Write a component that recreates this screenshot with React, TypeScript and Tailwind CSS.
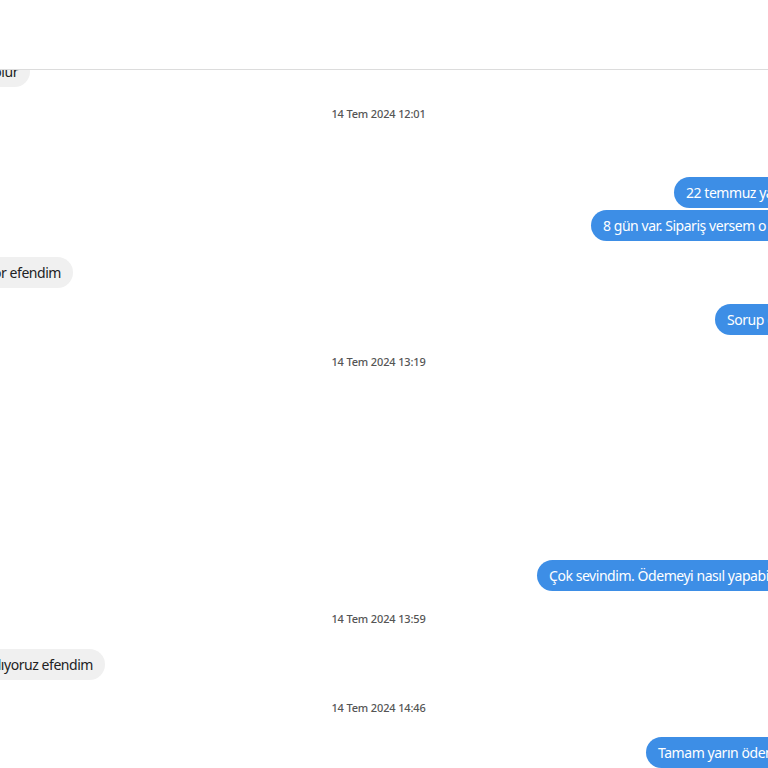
const font = { fontFamily: '"Noto Sans", "Open Sans", Arial, sans-serif' };

function Incoming({ text, edge, top }: { text: string; edge: string; top: string }) {
  return (
    <div className={`flex justify-end ${edge} ${top}`}>
      <div className="shrink-0 whitespace-nowrap rounded-full bg-[#f0f0f0] px-3 pt-[6px] pb-[5px] text-[14px] leading-[20px] tracking-[-0.45px] text-[#222]">
        {text}
      </div>
    </div>
  );
}

function Outgoing({ text, left, top }: { text: string; left: string; top: string }) {
  return (
    <div className={`flex ${top}`}>
      <div
        className={`shrink-0 whitespace-nowrap rounded-full bg-[#3d8ee6] px-3 pt-[6px] pb-[5px] text-[14px] leading-[20px] tracking-[-0.45px] text-white ${left}`}
      >
        {text}
      </div>
    </div>
  );
}

function Stamp({ text, top }: { text: string; top: string }) {
  return (
    <div
      className={`w-[757px] text-center text-[11px] leading-[16px] font-medium tracking-[-0.15px] text-[#555] ${top}`}
    >
      {text}
    </div>
  );
}

export default function App() {
  return (
    <div className="h-[768px] w-[768px] overflow-hidden bg-white" style={font}>
      <div className="relative z-10 h-[70px] border-b border-[#dcdcdc] bg-white" />
      <div className="flex flex-col">
        <Incoming text="Ürün stokta mevcut, gönderim yapılabilir olur" edge="w-[30px]" top="-mt-[14px]" />
        <Stamp text="14 Tem 2024 12:01" top="mt-[19px]" />
        <Outgoing text="22 temmuz yapabilir misiniz" left="ml-[674px]" top="mt-[55px]" />
        <Outgoing text="8 gün var. Sipariş versem o tarihe yetişir mi" left="ml-[591px]" top="mt-[2px]" />
        <Incoming text="Yetiştirebiliriz, sorup dönüyor efendim" edge="w-[73px]" top="mt-[16px]" />
        <Outgoing text="Sorup dönerseniz sevinirim" left="ml-[715px]" top="mt-[16px]" />
        <Stamp text="14 Tem 2024 13:19" top="mt-[19px]" />
        <Outgoing text="Çok sevindim. Ödemeyi nasıl yapabilirim" left="ml-[537px]" top="mt-[190px]" />
        <Stamp text="14 Tem 2024 13:59" top="mt-[20px]" />
        <Incoming text="IBAN üzerinden havale ile alıyoruz efendim" edge="w-[105px]" top="mt-[22px]" />
        <Stamp text="14 Tem 2024 14:46" top="mt-[20px]" />
        <Outgoing text="Tamam yarın ödemeyi yapacağım" left="ml-[646px]" top="mt-[21px]" />
      </div>
    </div>
  );
}
